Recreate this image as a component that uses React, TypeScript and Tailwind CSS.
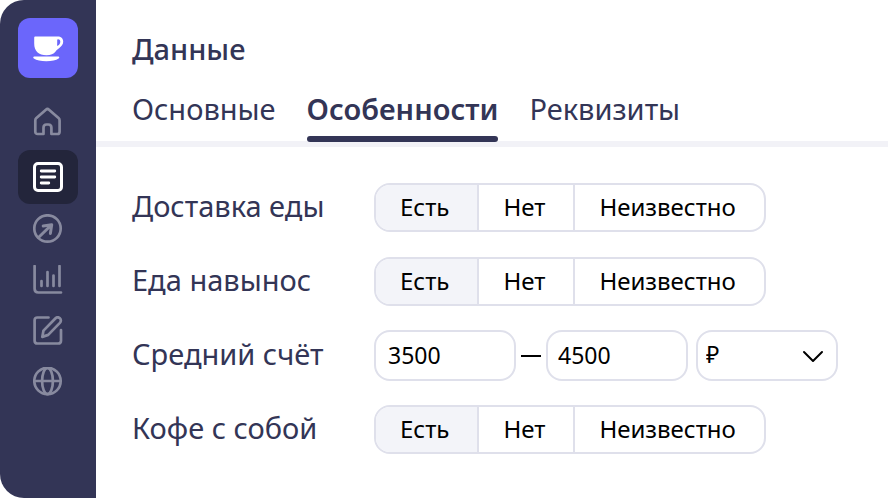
import { useState, type ReactNode } from "react";
import clsx from "clsx";

const TABS = ["Основные", "Особенности", "Реквизиты"];
const OPTIONS = ["Есть", "Нет", "Неизвестно"];

function Icon({ children }: { children: ReactNode }) {
  return (
    <svg
      width="30"
      height="30"
      viewBox="0 0 30 30"
      fill="none"
      stroke="currentColor"
      strokeWidth="2.7"
      strokeLinecap="round"
      strokeLinejoin="round"
      aria-hidden="true"
    >
      {children}
    </svg>
  );
}

function NavLink({ label, children }: { label: string; children: ReactNode }) {
  return (
    <a href="#" aria-label={label} className="flex h-[50px] w-full items-center justify-center">
      {children}
    </a>
  );
}

function Sidebar() {
  return (
    <aside className="flex w-24 shrink-0 flex-col items-center rounded-l-3xl bg-[#333556] pt-[18px] text-[#888a9f]">
      <a href="#" aria-label="Кафе" className="flex size-[60px] items-center justify-center rounded-xl bg-[#6b66fb]">
        <svg width="32" height="28" viewBox="0 0 32 28" fill="none" aria-hidden="true">
          <path
            d="M3.500 2.500h22.200c3.200 0 5.500 1.900 5.500 5.100 0 2.800-1.500 4.700-3.900 6.400-1.900 1.300-2.700 2.200-3.700 3.500C21.500 20 19 21.300 14.500 21.300 6.500 21.300 2.200 17 2.200 9.500V3.800c0-.8.5-1.300 1.300-1.300Z"
            fill="#fff"
          />
          <path d="M25.200 6c0-.5.300-.8.800-.8 1.600 0 2.300.9 2.300 2.400 0 1.900-.8 3.300-2.600 4.100-.4.200-.7 0-.6-.5.200-1.200.1-3.600.1-5.200Z" fill="#6b66fb" />
          <path d="M2.300 22.500h24c1.200 0 1.300 1.400.3 2-2.400 1.900-7 2.700-12.300 2.700S4.400 26.400 1.900 24.500c-1-.7-.8-2 .4-2Z" fill="#fff" />
        </svg>
      </a>
      <nav className="mt-4 flex w-full flex-col items-center">
        <a href="#" aria-label="Главная" className="flex h-14 w-full items-center justify-center">
          <Icon>
            <path d="M2.300 13.400c0-1 .4-1.800 1.100-2.500l9.500-8.200c.9-.8 2.200-.8 3.100 0l9.500 8.200c.7.700 1.100 1.500 1.100 2.500v11.300c0 1.400-.9 2.300-2.300 2.300h-5.900v-6.300c0-2-1.300-3.200-3-3.200h-1.900c-1.700 0-3 1.200-3 3.200V27H4.600c-1.400 0-2.300-.9-2.300-2.300Z" />
          </Icon>
        </a>
        <a
          href="#"
          aria-label="Данные"
          aria-current="page"
          className="flex h-[54px] w-[60px] items-center justify-center rounded-xl bg-[#23253b] text-white"
        >
          <Icon>
            <rect x="1.500" y="1.500" width="27" height="27" rx="3.500" strokeWidth="3" />
            <path d="M8.200 9h13.600M8.200 15h13.600M8.200 21h7.600" strokeWidth="2.800" />
          </Icon>
        </a>
        <div className="flex w-full flex-col gap-px">
          <NavLink label="Продвижение">
            <Icon>
              <circle cx="14.500" cy="14.500" r="13.200" />
              <path d="M5.500 23.500 18.300 11M10.200 12l8.500-1.300-1.300 8.700" strokeWidth="3" />
            </Icon>
          </NavLink>
          <NavLink label="Статистика">
            <Icon>
              <path d="M1.600 1v22.700c0 2.300 1.400 3.800 3.700 3.800H28M8.500 16v5M14.500 7v14M20.500 10.500V21M26.500 1v20" />
            </Icon>
          </NavLink>
          <NavLink label="Редактирование">
            <Icon>
              <path d="M15.500 1.500H4.400c-1.800 0-2.800 1-2.800 2.800v20.400c0 1.800 1 2.800 2.800 2.800h20.800c1.800 0 2.800-1 2.800-2.800V14" />
              <path d="m9.300 20.900 1.200-6.300L22.300 2.500c1.300-1.300 3.300-1.400 4.600-.2s1.300 3.200 0 4.600L15.200 18.900Z" />
            </Icon>
          </NavLink>
          <NavLink label="Сайт">
            <Icon>
              <circle cx="14.500" cy="14" r="13.200" />
              <ellipse cx="14.500" cy="14" rx="5.400" ry="13.200" />
              <path d="M1.300 14h26.400" />
            </Icon>
          </NavLink>
        </div>
      </nav>
    </aside>
  );
}

function Choice({ label }: { label: string }) {
  const [value, setValue] = useState(OPTIONS[0]);

  return (
    <>
      <span className="w-[242px] shrink-0 pb-1 text-[29px]">{label}</span>
      <div role="group" aria-label={label} className="flex h-full overflow-hidden rounded-2xl border-2 border-[#dfe0eb]">
        {OPTIONS.map((option) => (
          <button
            key={option}
            type="button"
            aria-pressed={value === option}
            onClick={() => setValue(option)}
            className={clsx(
              "border-r-2 border-[#dfe0eb] pr-7 pb-0.5 pl-6 text-2xl text-black last:border-r-0",
              value === option && "bg-[#f3f4f9]"
            )}
          >
            {option}
          </button>
        ))}
      </div>
    </>
  );
}

export default function App() {
  const [tab, setTab] = useState("Особенности");

  return (
    <div className="flex min-h-screen bg-white font-['Noto_Sans',sans-serif] text-[#333556]">
      <Sidebar />
      <main className="min-w-0 flex-1">
        {/* Header with tabs */}
        <header className="border-b-6 border-[#f2f2f7] pl-9 pt-7">
          <h1 className="text-[29px] leading-[42px] font-medium">Данные</h1>
          <div role="tablist" className="mt-[18px] -mb-px flex gap-[31px]">
            {TABS.map((name) => (
              <button
                key={name}
                type="button"
                role="tab"
                aria-selected={tab === name}
                onClick={() => setTab(name)}
                className={clsx("text-[29px] leading-[42px]", tab === name && "font-semibold")}
              >
                {name}
                <span className={clsx("mt-1.5 block h-1.5 rounded-full", tab === name && "bg-[#333556]")} />
              </button>
            ))}
          </div>
        </header>

        {/* Features */}
        <form className="flex flex-col gap-[25px] pt-9 pl-9">
          <div className="flex h-[49px] items-center">
            <Choice label="Доставка еды" />
          </div>
          <div className="flex h-[49px] items-center">
            <Choice label="Еда навынос" />
          </div>
          <div className="flex h-[49px] items-center">
            <label htmlFor="bill-from" className="w-[242px] shrink-0 pb-1 text-[29px]">
              Средний счёт
            </label>
            <div className="flex h-[51px] items-center text-[23px] text-black">
              <input
                id="bill-from"
                defaultValue="3500"
                className="h-full w-[142px] rounded-2xl border-2 border-[#dfe0eb] px-3 pb-0.5"
              />
              <span className="mx-[5px] h-0.5 w-5 bg-black" />
              <input
                aria-label="Средний счёт до"
                defaultValue="4500"
                className="h-full w-[142px] rounded-2xl border-2 border-[#dfe0eb] px-2.5 pb-0.5"
              />
              <div className="relative ml-2 h-full">
                <select
                  aria-label="Валюта"
                  className="h-full w-[142px] appearance-none rounded-2xl border-2 border-[#dfe0eb] bg-white px-2 pb-0.5"
                >
                  <option>₽</option>
                </select>
                <svg
                  className="pointer-events-none absolute top-5 right-3.5"
                  width="22"
                  height="13"
                  viewBox="0 0 22 13"
                  fill="none"
                  stroke="#000"
                  strokeWidth="2"
                  strokeLinecap="round"
                  strokeLinejoin="round"
                  aria-hidden="true"
                >
                  <path d="m2 2 9 9 9-9" />
                </svg>
              </div>
            </div>
          </div>
          <div className="flex h-[49px] items-center">
            <Choice label="Кофе с собой" />
          </div>
        </form>
      </main>
    </div>
  );
}
